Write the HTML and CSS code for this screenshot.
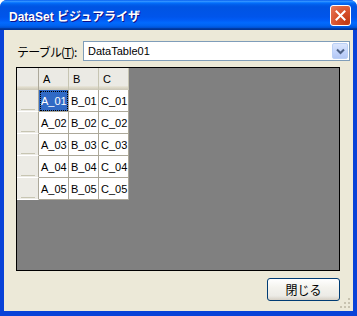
FILE: index.html
```html
<!DOCTYPE html>
<html lang="ja">
<head>
  <meta charset="UTF-8" />
  <title>DataSet ビジュアライザ</title>
  <link rel="stylesheet" href="styles.css">
</head>
<body>

  <div class="window">
    <!-- Title bar -->
    <div class="titlebar">
      <span class="title">DataSet ビジュアライザ</span>
      <button class="close-btn" aria-label="閉じる">
        <svg width="11" height="11" viewBox="0 0 11 11">
          <path d="M1.5 1.5 L9.5 9.5 M9.5 1.5 L1.5 9.5" stroke="#fff" stroke-width="2" stroke-linecap="square"/>
        </svg>
      </button>
    </div>

    <div class="client">
      <!-- Table selector -->
      <div class="table-row">
        <label class="label">テーブル(<u>T</u>):</label>
        <div class="combo">
          <span class="combo-text">DataTable01</span>
          <span class="combo-btn">
            <svg width="9" height="7" viewBox="0 0 9 7">
              <path d="M1 1.5 L4.5 5 L8 1.5" fill="none" stroke="#4d6185" stroke-width="2"/>
            </svg>
          </span>
        </div>
      </div>

      <!-- Grid -->
      <div class="grid-view">
        <div class="grid" id="grid"></div>
      </div>

      <!-- Buttons -->
      <div class="button-row">
        <button class="btn">閉じる</button>
      </div>

      <svg class="grip" width="11" height="11" viewBox="0 0 11 11">
        <rect x="8" y="0" width="2" height="2" fill="#c8c3b0"/>
        <rect x="4" y="4" width="2" height="2" fill="#c8c3b0"/>
        <rect x="8" y="4" width="2" height="2" fill="#c8c3b0"/>
        <rect x="0" y="8" width="2" height="2" fill="#c8c3b0"/>
        <rect x="4" y="8" width="2" height="2" fill="#c8c3b0"/>
        <rect x="8" y="8" width="2" height="2" fill="#c8c3b0"/>
      </svg>
    </div>
  </div>

  <script>
    const columns = ["A", "B", "C"];
    const rows = 5;
    const grid = document.getElementById("grid");

    function cell(cls, text) {
      const div = document.createElement("div");
      div.className = cls;
      if (text) div.textContent = text;
      grid.appendChild(div);
    }

    // header row
    cell("corner");
    columns.forEach(c => cell("col-head", c));

    // data rows
    for (let r = 1; r <= rows; r++) {
      cell("row-head");
      columns.forEach((c, i) => {
        const selected = r === 1 && i === 0;
        cell(selected ? "cell selected" : "cell", `${c}_0${r}`);
      });
    }
  </script>
</body>
</html>
```

FILE: styles.css
```css
* {
  margin: 0;
  padding: 0;
  box-sizing: border-box;
}

body {
  background: #fff;
  font-family: 'Liberation Sans', 'Noto Sans CJK JP', sans-serif;
  font-size: 12px;
  color: #000;
}

.window {
  width: 357px;
  height: 316px;
  display: flex;
  flex-direction: column;
  background: #0842d8;
  border-radius: 7px 7px 0 0;
  overflow: hidden;
}

/* Title bar */
.titlebar {
  height: 30px;
  display: flex;
  align-items: center;
  justify-content: space-between;
  padding: 0 6px 0 9px;
  background: linear-gradient(to bottom, #0058ee 0%, #3593ff 4%, #288eff 6%, #127dff 8%, #036ffc 10%, #0262ee 14%, #0057e5 20%, #0054e3 24%, #0055eb 56%, #005bf5 66%, #026afe 76%, #0062ef 86%, #0052d6 92%, #0040ab 94%, #003092 100%);
}

.title {
  color: #fff;
  font-weight: bold;
  font-size: 12px;
  text-shadow: 1px 1px #0f1089;
  margin-top: 1px;
}

.close-btn {
  width: 21px;
  height: 21px;
  margin-top: 1px;
  border: 1px solid #fff;
  border-radius: 3px;
  background: radial-gradient(circle at 85% 85%, #c23a12 0%, #d8522c 50%, #e87a5c 100%);
  display: flex;
  align-items: center;
  justify-content: center;
}

/* Client area */
.client {
  flex: 1;
  margin: 0 4px 5px 4px;
  background: #ece9d8;
  padding: 11px 3px 0 12px;
  display: flex;
  flex-direction: column;
  position: relative;
}

.table-row {
  display: flex;
  align-items: center;
  height: 20px;
}

.label {
  width: 67px;
  padding-left: 1px;
  font-family: 'Noto Sans CJK JP', sans-serif;
  font-size: 12px;
  letter-spacing: -0.8px;
}

.combo {
  flex: 1;
  height: 20px;
  border: 1px solid #7f9db9;
  background: #fff;
  display: flex;
  align-items: center;
  justify-content: space-between;
  padding: 0 1px 0 4px;
}

.combo-text {
  font-size: 11px;
}

.combo-btn {
  width: 16px;
  height: 16px;
  border: 1px solid #bad0f6;
  border-radius: 2px;
  background: linear-gradient(to bottom, #dbe6fd, #c1d3fb 60%, #b4c8f4);
  display: flex;
  align-items: center;
  justify-content: center;
}

/* Grid view */
.grid-view {
  width: 324px;
  height: 204px;
  margin-top: 6px;
  border: 1px solid #000;
  background: #808080;
}

.grid {
  display: grid;
  grid-template-columns: 22px repeat(3, 30px);
  grid-auto-rows: 22px;
  width: 112px;
  background: #ece9d8;
}

.grid > div {
  display: flex;
  align-items: center;
  font-size: 11px;
}

.corner,
.col-head {
  background: linear-gradient(to bottom, #ebeae4 0%, #ebeae4 80%, #e2decd 86%, #d6d2c2 93%, #cbc7b8 100%);
  border-right: 1px solid #cbc7b8;
  padding-left: 4px;
  font-size: 12px;
}

.col-head {
  border-right: 1px solid #c7c5b2;
}

.corner {
  border-right: 1px solid #aca899;
}

.row-head {
  background: linear-gradient(#c7c5b2, #c7c5b2) no-repeat center bottom 1px / 14px 1px, #ecebe5;
  border-right: 1px solid #aca899;
  border-bottom: 1px solid #fff;
}

.cell {
  background: #fff;
  border-right: 1px solid #aca899;
  border-bottom: 1px solid #aca899;
  padding-left: 2px;
}

.cell.selected {
  background: #316ac5;
  color: #fff;
  outline: 1px dotted #000;
  outline-offset: -2px;
}

/* Button row */
.button-row {
  width: 324px;
  margin-top: 7px;
  display: flex;
  justify-content: flex-end;
}

.btn {
  width: 73px;
  height: 23px;
  border: 1px solid #003c74;
  border-radius: 3px;
  background: linear-gradient(to bottom, #fff 0%, #f4f3ee 40%, #ecebe6 80%, #d6d0c5 100%);
  font-family: 'Noto Sans CJK JP', sans-serif;
  font-size: 12px;
  color: #000;
}

.grip {
  position: absolute;
  right: 2px;
  bottom: 2px;
}
```
